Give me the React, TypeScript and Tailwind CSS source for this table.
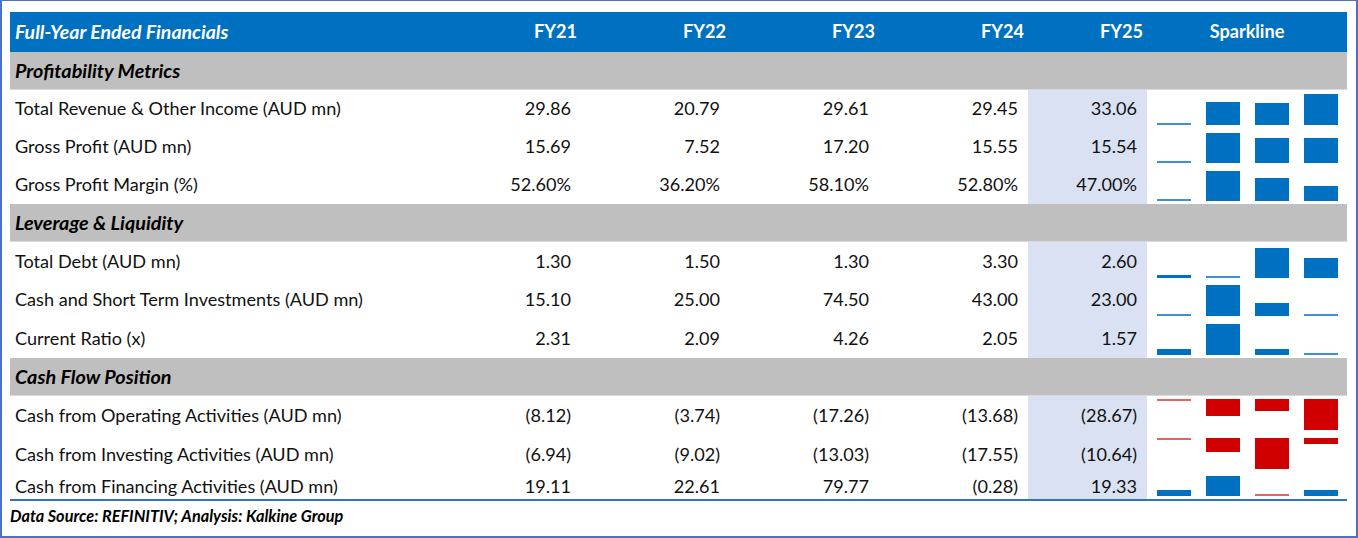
import React from 'react';

type Bar = { h: number; neg?: boolean; thin?: boolean };

interface Row {
  label: string;
  values: string[];
  height: number;
  mode: 'up' | 'down';
  bars: Bar[];
}

interface Section {
  title: string;
  rows: Row[];
}

const years = ['FY21', 'FY22', 'FY23', 'FY24', 'FY25'];

const sections: Section[] = [
  {
    title: 'Profitability Metrics',
    rows: [
      {
        label: 'Total Revenue & Other Income (AUD mn)',
        values: ['29.86', '20.79', '29.61', '29.45', '33.06'],
        height: 38,
        mode: 'up',
        bars: [{ h: 2, thin: true }, { h: 23 }, { h: 22 }, { h: 31 }],
      },
      {
        label: 'Gross Profit (AUD mn)',
        values: ['15.69', '7.52', '17.20', '15.55', '15.54'],
        height: 38,
        mode: 'up',
        bars: [{ h: 2, thin: true }, { h: 30 }, { h: 25 }, { h: 25 }],
      },
      {
        label: 'Gross Profit Margin (%)',
        values: ['52.60%', '36.20%', '58.10%', '52.80%', '47.00%'],
        height: 38,
        mode: 'up',
        bars: [{ h: 2, thin: true }, { h: 30 }, { h: 23 }, { h: 15 }],
      },
    ],
  },
  {
    title: 'Leverage & Liquidity',
    rows: [
      {
        label: 'Total Debt (AUD mn)',
        values: ['1.30', '1.50', '1.30', '3.30', '2.60'],
        height: 39,
        mode: 'up',
        bars: [{ h: 3 }, { h: 2, thin: true }, { h: 30 }, { h: 20 }],
      },
      {
        label: 'Cash and Short Term Investments (AUD mn)',
        values: ['15.10', '25.00', '74.50', '43.00', '23.00'],
        height: 38,
        mode: 'up',
        bars: [{ h: 2, thin: true }, { h: 31 }, { h: 13 }, { h: 2, thin: true }],
      },
      {
        label: 'Current Ratio (x)',
        values: ['2.31', '2.09', '4.26', '2.05', '1.57'],
        height: 39,
        mode: 'up',
        bars: [{ h: 6 }, { h: 31 }, { h: 6 }, { h: 2, thin: true }],
      },
    ],
  },
  {
    title: 'Cash Flow Position',
    rows: [
      {
        label: 'Cash from Operating Activities (AUD mn)',
        values: ['(8.12)', '(3.74)', '(17.26)', '(13.68)', '(28.67)'],
        height: 39,
        mode: 'down',
        bars: [
          { h: 2, neg: true, thin: true },
          { h: 17, neg: true },
          { h: 12, neg: true },
          { h: 31, neg: true },
        ],
      },
      {
        label: 'Cash from Investing Activities (AUD mn)',
        values: ['(6.94)', '(9.02)', '(13.03)', '(17.55)', '(10.64)'],
        height: 39,
        mode: 'down',
        bars: [
          { h: 2, neg: true, thin: true },
          { h: 14, neg: true },
          { h: 31, neg: true },
          { h: 6, neg: true },
        ],
      },
      {
        label: 'Cash from Financing Activities (AUD mn)',
        values: ['19.11', '22.61', '79.77', '(0.28)', '19.33'],
        height: 25,
        mode: 'up',
        bars: [{ h: 6 }, { h: 20 }, { h: 2, neg: true, thin: true }, { h: 6 }],
      },
    ],
  },
];

const barColor = (b: Bar) => {
  if (b.neg) return b.thin ? 'bg-[#e26464]' : 'bg-[#d00000]';
  return b.thin ? 'bg-[#3f8fd8]' : 'bg-[#0070c0]';
};

const Sparkline: React.FC<{ row: Row }> = ({ row }) => (
  <div
    className={`w-[200px] h-full flex gap-[15px] pl-[10px] bg-white ${
      row.mode === 'down' ? 'items-start pt-[3px]' : 'items-end pb-[3px]'
    }`}
  >
    {row.bars.map((b, i) => (
      <div key={i} className={`w-[34px] ${barColor(b)}`} style={{ height: b.h }} />
    ))}
  </div>
);

const SectionHeader: React.FC<{ title: string }> = ({ title }) => (
  <div className="h-[38px] w-full bg-[#bfbfbf] border-b border-[#d9d9d9] flex items-center pl-[5px]">
    <span className="font-bold italic text-black text-[19.8px]">{title}</span>
  </div>
);

const DataRow: React.FC<{ row: Row }> = ({ row }) => (
  <div className="flex w-full text-[#111]" style={{ height: row.height }}>
    <div className="w-[422px] flex items-center pl-[5px] whitespace-nowrap">{row.label}</div>
    {row.values.slice(0, 4).map((v, i) => (
      <div key={i} className="w-[149px] flex items-center justify-end pr-[10px]">
        {v}
      </div>
    ))}
    <div className="w-[119px] flex items-center justify-end pr-[10px] bg-[#d9e1f2]">{row.values[4]}</div>
    <Sparkline row={row} />
  </div>
);

export default function App() {
  return (
    <div
      className="w-[1358px] h-[538px] bg-white border-2 border-t border-[#4a72c8] pl-[8px] pt-[11px] pr-[8px] text-[18.1px]"
      style={{ fontFamily: 'Lato, "Liberation Sans", sans-serif' }}
    >
      <div className="w-[1337px]">
        <div className="h-[40px] flex bg-[#0070c0] text-white font-bold">
          <div className="w-[422px] flex items-center pl-[5px] italic text-[19.5px]">Full-Year Ended Financials</div>
          {years.map((y, i) => (
            <div
              key={y}
              className={`${i === 4 ? 'w-[119px]' : 'w-[149px]'} flex items-center justify-end pr-[4px]`}
            >
              {y}
            </div>
          ))}
          <div className="w-[200px] flex items-center justify-center">Sparkline</div>
        </div>

        {sections.map((s) => (
          <div key={s.title}>
            <SectionHeader title={s.title} />
            {s.rows.map((r) => (
              <DataRow key={r.label} row={r} />
            ))}
          </div>
        ))}

        <div className="h-[2px] bg-[#2e75b6]" />
        <div className="h-[30px] flex items-center text-[16.3px] font-bold italic text-black">
          Data Source: REFINITIV; Analysis: Kalkine Group
        </div>
      </div>
    </div>
  );
}
